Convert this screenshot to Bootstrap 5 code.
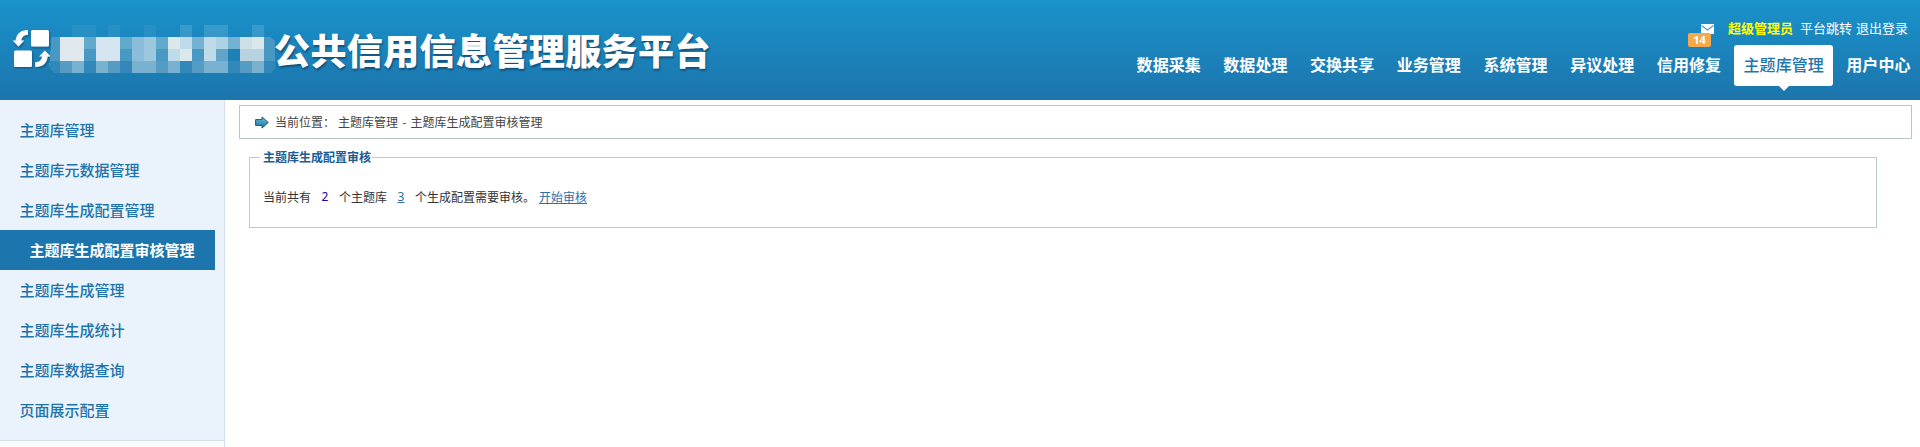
<!DOCTYPE html>
<html lang="zh-CN">
<head>
<meta charset="utf-8">
<meta name="viewport" content="width=device-width, initial-scale=1">
<title>公共信用信息管理服务平台</title>
<link href="https://cdn.jsdelivr.net/npm/bootstrap@5.3.0/dist/css/bootstrap.min.css" rel="stylesheet">
<style>
body{font-family:"Noto Sans","Noto Sans CJK SC",sans-serif;font-size:12px;line-height:1.5;color:#333;height:447px;overflow:hidden}
a{text-decoration:none}
.topbar{height:100px;background:linear-gradient(#1a92cb,#1c75ac)}
.logo{margin:29px 0 0 12px}
.redacted{margin:25px 0 0 -3px;width:228px}
.site-title{font:900 36px/50px "Noto Sans CJK SC",sans-serif;letter-spacing:.4px;color:#fff;margin:24px 0 0 -2px;text-shadow:1px 2px 2px rgba(10,55,90,.65);white-space:nowrap}
.tools{font:13px/20px "Noto Sans CJK SC",sans-serif;margin:18px 12px 0 0;height:27px;white-space:nowrap}
.tools a{color:#fff}
.tools .who{color:#ff0;font-weight:700;margin:0 7px 0 14px}
.mail{width:13px;height:20px}
.mail svg{margin-top:6px}
.count{left:-13px;top:15px;width:23px;height:14px;background:#f5a94d;color:#fff;border-radius:2px;font:700 11px/14px "Noto Sans",sans-serif;text-align:center}
.mainnav{gap:3.5px}
.mainnav .nav-link{font:700 16px/39px "Noto Sans CJK SC",sans-serif;height:41px;padding:0 9.5px;color:#fff;white-space:nowrap;letter-spacing:.05px}
.mainnav .active{background:#fff;color:#1d76ac;border-radius:3px;position:relative;font-weight:500}
.mainnav .active::after{content:"";position:absolute;left:50%;top:41px;margin-left:-5px;border:5px solid transparent;border-top-color:#fff;border-bottom:0}
.page{height:347px}
.side{width:225px;border-right:1px solid #d3dfea;background:#fafdfe}
.menu{background:#eaf2fb;height:341px;padding-top:10px;border-bottom:1px solid #d3dfea}
.menu a{display:block;width:215px;height:40px;padding-left:19.5px;font:500 15px/39px "Noto Sans CJK SC",sans-serif;color:#1e74aa}
.menu a.current{background:#1c76ad;color:#fff;font-weight:700;padding-left:29.5px}
.crumbs{margin:5px 8px 0 14px;height:34px;border:1px solid #b8c9c4;padding-left:15px;font-family:"Noto Sans CJK SC",sans-serif;color:#444;white-space:pre}
.crumbs svg{margin-right:6px}
.place{margin-left:3px;word-spacing:1.5px}
.panel{position:relative;margin:18px 43px 0 24px;height:71px;border:1px solid #b8cdc6;padding:30px 0 0 13px;font-family:"Noto Sans CJK SC",sans-serif;white-space:nowrap}
.panel h2{position:absolute;left:10px;top:-10px;margin:0;padding:0 1px 0 3px;background:#fff;font:700 12px/18px "Noto Sans CJK SC",sans-serif;color:#215b91}
.num{width:28px;text-align:center;font-family:"Noto Sans",sans-serif}
.panel a{color:#2f6da8;text-decoration:underline}
</style>
</head>
<body class="bg-white">
<header class="topbar d-flex align-items-start">
  <svg class="logo flex-shrink-0" width="39" height="40" viewBox="0 0 39 40">
    <defs><filter id="sh" x="-10%" y="-10%" width="130%" height="130%"><feDropShadow dx="1" dy="1.5" stdDeviation=".8" flood-color="#0b3d63" flood-opacity=".6"/></filter></defs>
    <g fill="#fff" filter="url(#sh)">
      <rect x="19" y="1" width="18" height="16.500" rx="1.500"/><rect x="2" y="21.500" width="18" height="16.500" rx="1.500"/>
      <path d="M16 1C8.500 1 4.500 5 3.600 11.500H.6L6.500 17.500 12.200 11.500H9.200C9.700 8 11.500 6 16 6Z"/>
      <path d="M23.300 38C30.800 38 34.800 34 35.700 27.500H38.700L32.800 21.500 27.100 27.500H30.100C29.600 31 27.800 33 23.300 33Z"/>
    </g>
  </svg>
  <svg class="redacted flex-shrink-0" width="228" height="48" viewBox="0 0 19 4" preserveAspectRatio="none" shape-rendering="crispEdges">
    <g fill="#fff">
      <path opacity=".06" d="M2 0h2v1h-2zM5 0h1v1h-1zM8 0h1v1h-1z"/><path opacity=".13" d="M11 0h1v1h-1zM13 0h2v1h-2zM17 0h1v1h-1z"/>
    </g>
    <path fill="#4799c4" d="M.3 1H18.500L18.900 1.300V3.600L18.600 4H.5L.1 3.500Z"/>
    <path fill="#3288bb" d="M.2 3H18.900V3.600L18.600 4H.5L.1 3.500Z"/>
    <path fill="#dfe8ed" d="M1 1h2v2H1z"/><path fill="#d4e5f0" d="M4 1h2v2H4z"/>
    <path fill="#89bdd9" d="M7 1h2v2H7z"/><path fill="#9bc7df" d="M8 1h1v2H8z"/>
    <path fill="#61aace" d="M3 1h1v1H3zM6 1h1v1H6zM9 1h1v1H9z"/>
    <path fill="#bfdbea" d="M10 1h2v2h-2zM13 1h1v2h-1z"/><path fill="#dce7ec" d="M10 1h1v1h-1zM11 2h1v1h-1zM17 1h1v1h-1z"/>
    <path fill="#73b2d3" d="M12 1h1v1h-1zM15 1h1v1h-1z"/><path fill="#add2e4" d="M14 1h1v1h-1z"/>
    <path fill="#62a5c9" d="M14 2h1v1h-1z"/><path fill="#1f80b7" d="M15 2h1v1h-1z"/>
    <path fill="#cddfe9" d="M16 1h1v1h-1z"/><path fill="#b8d2e0" d="M16 2h2v1h-2z"/>
    <path fill="#79b1d0" d="M2 3h1v1H2zM4 3h1v1H4zM7 3h2v1H7zM10 3h1v1h-1zM13 3h2v1h-2zM17 3h1v1h-1z"/>
    <path fill="#559bc3" d="M1 3h1v1H1zM5 3h1v1H5zM9 3h1v1H9zM12 3h1v1h-1zM16 3h1v1h-1z"/>
  </svg>
  <div class="site-title">公共信用信息管理服务平台</div>
  <div class="ms-auto d-flex flex-column align-items-end">
    <div class="tools d-flex">
      <a href="#" class="mail position-relative d-block">
        <svg class="d-block" width="13" height="10" viewBox="0 0 13 10"><path fill="#fff" d="M0 0H13V10H0Z"/><path d="M.5 1.500 6.500 6 12.500 1.500" fill="none" stroke="#4a9dcb" stroke-width="1.100"/></svg>
        <span class="count position-absolute d-block">14</span>
      </a>
      <a href="#" class="who">超级管理员</a><a href="#">平台跳转</a><a href="#" class="ms-1">退出登录</a>
    </div>
    <nav class="mainnav nav flex-nowrap">
      <a class="nav-link" href="#">数据采集</a><a class="nav-link" href="#">数据处理</a><a class="nav-link" href="#">交换共享</a><a class="nav-link" href="#">业务管理</a><a class="nav-link" href="#">系统管理</a><a class="nav-link" href="#">异议处理</a><a class="nav-link" href="#">信用修复</a><a class="nav-link active" href="#">主题库管理</a><a class="nav-link" href="#">用户中心</a>
    </nav>
  </div>
</header>
<div class="page d-flex">
  <aside class="side flex-shrink-0">
    <nav class="menu">
      <a href="#">主题库管理</a>
      <a href="#">主题库元数据管理</a>
      <a href="#">主题库生成配置管理</a>
      <a href="#" class="current">主题库生成配置审核管理</a>
      <a href="#">主题库生成管理</a>
      <a href="#">主题库生成统计</a>
      <a href="#">主题库数据查询</a>
      <a href="#">页面展示配置</a>
    </nav>
  </aside>
  <main class="flex-grow-1">
    <div class="crumbs d-flex align-items-center"><svg width="14" height="13" viewBox="0 0 14 13"><defs><linearGradient id="ar" x2="0" y2="1"><stop stop-color="#6cc3dc"/><stop offset="1" stop-color="#12719d"/></linearGradient></defs><path d="M.6 3.600H7V.9L13.300 6.500 7 12.100V9.400H.6Z" fill="url(#ar)" stroke="#1c5878"/></svg><span>当前位置：</span><span class="place">主题库管理 - 主题库生成配置审核管理</span></div>
    <section class="panel">
      <h2>主题库生成配置审核</h2>
      <div class="d-flex"><span>当前共有</span><span class="num" style="color:#20a">2</span><span>个主题库</span><a class="num" href="#">3</a><span>个生成配置需要审核。</span><a href="#" class="ms-1">开始审核</a></div>
    </section>
  </main>
</div>
<script src="https://cdn.jsdelivr.net/npm/bootstrap@5.3.0/dist/js/bootstrap.bundle.min.js"></script>
</body>
</html>
